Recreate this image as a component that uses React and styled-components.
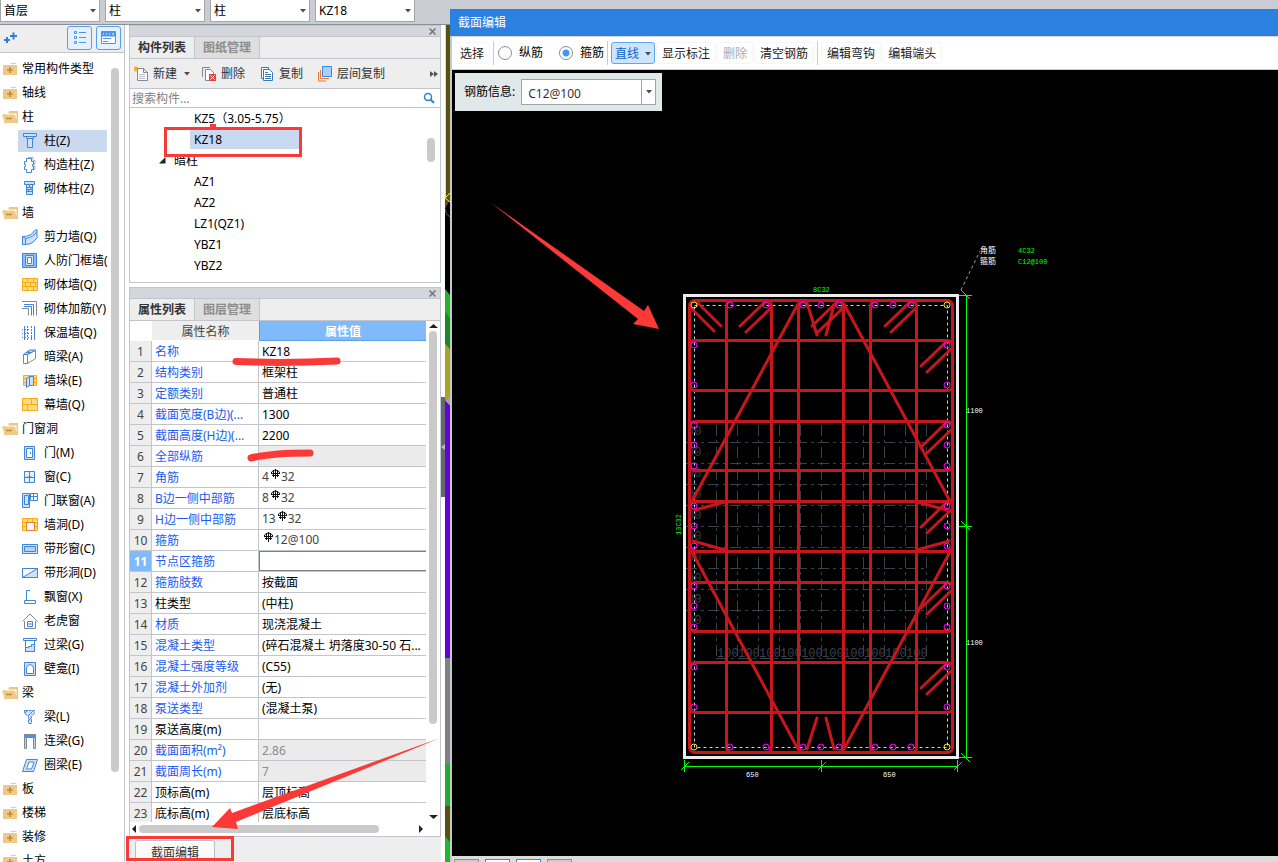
import React, { useState } from 'react'
import styled, { createGlobalStyle } from 'styled-components'

const BLUE = '#3f87d6'
const PALE = '#cfe1f8'
const GOLD = '#f9ab14'
const SAND = '#fddb80'
const STEEL = '#7d8996'

const icons = {
  column: (
    <g fill='none' stroke={BLUE}>
      <path d='M1.5 .5h13v3h-13z M4.5 3.5h7v2h-7z' fill={PALE} />
      <path d='M5.5 5.5h5v9h-5z' fill={PALE} />
    </g>
  ),
  tieColumn: (
    <g fill='none' stroke={BLUE}>
      <path d='M6 .5h5v3h2v3h-1v3h1v3h-2' stroke='#9fb4cc' />
      <path d='M4.5 1.5h5v3h2v3h-1v2h1v3h-2v3h-5v-3h-2v-3h1v-2h-1v-3h2z' />
    </g>
  ),
  brickColumn: (
    <g fill='none' stroke={BLUE}>
      <path d='M2.500 .5h10v3h-10z M4.500 3.5h6v10h-6z' fill={PALE} />
      <path d='M4 6.500h7 M4 8.500h7 M4 10.500h7 M7.500 4v2 M9 7v2 M6.500 9v2' />
    </g>
  ),
  shearWall: (
    <g fill={PALE} stroke={BLUE}>
      <path d='M.5 7.500q9 0 12-6l2.500-1v8q-4 7-11.500 7h-3z' />
      <path d='M.5 7.500l3 2q8-1 11.500-7 M3.500 9.500v6' fill='none' />
    </g>
  ),
  doorFrame: (
    <g fill={PALE} stroke={BLUE}>
      <path d='M.5 .5h14v14h-14z' fill='#8fbdf0' />
      <path d='M3.500 2.500h8v10h-8z' />
      <path d='M5.500 4.500h4v6h-4z' fill='#fff' />
    </g>
  ),
  brick: (
    <g fill={SAND} stroke={GOLD}>
      <path d='M.5 1.500h15v12h-15z' />
      <path d='M0 5.500h16 M0 9.500h16 M5.500 2v3 M11.500 2v3 M3.500 6v3 M8.500 6v3 M13.500 6v3 M5.500 10v3 M11.500 10v3' />
    </g>
  ),
  reinforce: (
    <g fill='none' stroke={BLUE}>
      <path d='M0 .5h14.500v14' stroke={STEEL} />
      <path d='M2 3.500h9.500v11 M2 5.500h7.500v9' />
      <path d='M0 7.500h6.500v7' stroke={STEEL} />
    </g>
  ),
  insulation: (
    <g fill='none' stroke={BLUE}>
      <path d='M2.500 1v14 M12.500 1v14' />
      <path d='M5.500 1v14 M9.500 1v14' strokeDasharray='2 1' />
      <path d='M0 4.500h14 M0 8.500h14 M0 12.500h14' strokeDasharray='1 2' />
    </g>
  ),
  hiddenBeam: (
    <g fill='#fff' stroke={STEEL}>
      <path d='M1.500 5.500h4v9h-4z M5.500 5.500l8-4v8l-8 5z' />
      <path d='M1.500 5.500l6-4.500h6l-8 4.500z M4 3.500h5 M7 2v3' fill={PALE} stroke={BLUE} />
    </g>
  ),
  pier: (
    <g fill={SAND} stroke={GOLD}>
      <path d='M1.500 2.500h13v10h-13z M1 5.500h14 M1 9.500h14' />
      <path d='M4.500 5.500l3-2v9l-3 2z M7.500 3.500h4v9h-4z' fill={PALE} stroke={BLUE} />
    </g>
  ),
  curtain: (
    <g fill={SAND} stroke={GOLD}>
      <path d='M.5 1.500h15v12h-15z M0 7.500h16 M9.500 1v6 M5.500 8v6' />
    </g>
  ),
  door: (
    <g fill='#fff' stroke={BLUE}>
      <path d='M2.500 1.500h10v13h-10z' fill={PALE} />
      <path d='M4.500 3.500h6v9h-6z M8.500 7v2' />
    </g>
  ),
  window: (
    <g fill='#fff' stroke={BLUE}>
      <path d='M2.500 2.500h10v11h-10z' fill='#e8f1fc' />
      <path d='M7.500 2v12 M2 8.500h11 M6 7v1 M9 7v1' />
    </g>
  ),
  doorWindow: (
    <g fill={PALE} stroke={BLUE}>
      <path d='M.5 .5h7v14h-7z' />
      <path d='M2.500 2.500h4v9h-4z' />
      <path d='M8.500 .5h7v7h-7z M11.500 0v8 M8 3.500h8' fill='#fff' />
    </g>
  ),
  wallHole: (
    <g fill={SAND} stroke={GOLD}>
      <path d='M.5 1.500h15v12h-15z M0 5.500h16 M0 9.500h16 M5.500 2v3 M10.500 2v3' />
      <path d='M4.500 5.500h8v8h-8z' fill='#fff' stroke='#ee7a35' />
    </g>
  ),
  stripWindow: (
    <g fill={PALE} stroke={BLUE}>
      <path d='M.5 3.500h15v9h-15z' />
      <path d='M2.500 5.500h11v5h-11z' fill='#b7d1f3' />
    </g>
  ),
  stripHole: (
    <g fill='#fff' stroke={BLUE}>
      <path d='M.5 3.500h15v9h-15z' />
      <path d='M.5 12.500l15-9v9z' fill={PALE} />
    </g>
  ),
  bayWindow: (
    <g fill='#fff' stroke={BLUE}>
      <path d='M8 1.500H4.500v10 M2.500 11.500h11v3h-11z' />
    </g>
  ),
  dormer: (
    <g fill='none' stroke={STEEL}>
      <path d='M.5 8.500L8 1l7.500 7.500 M2.500 8v7.500h11V8' />
      <path d='M5.500 8.500h5v5h-5z M5.500 11h5' stroke={BLUE} />
    </g>
  ),
  lintel: (
    <g fill='#fff' stroke={BLUE}>
      <path d='M1.500 1.500h13v2h-13z M3.500 3.500h9v11h-9z' />
      <path d='M3.500 14.500V10.500h3v-1h3v-2h3v7z' fill={PALE} />
    </g>
  ),
  niche: (
    <g fill={PALE} stroke={BLUE}>
      <path d='M2.500 1.500h11v13h-11z' />
      <path d='M4.500 12.500V7q0-3 3.500-3.500Q11.500 4 11.500 7v5.500z' fill='#fff' />
    </g>
  ),
  beam: (
    <g fill={PALE} stroke={BLUE}>
      <path d='M2.500 1.500h10v3l-3 3v7h-3v-7l-4-3z' strokeDasharray='3 1' />
      <path d='M3 4l3-3 M6 7l5-5 M7 11l2-2' fill='none' />
    </g>
  ),
  linkBeam: (
    <g fill='#c9cdd2' stroke={STEEL}>
      <path d='M2.500 3.500h2v12h-2z M11.500 3.500h2v12h-2z' />
      <path d='M2.500 1.500h11v3h-11z' fill='#4e93e2' />
    </g>
  ),
  ringBeam: (
    <g fill={PALE} stroke={BLUE}>
      <path d='M4.500 2.500h11l-4 12H.5z' />
      <path d='M7 5h5l-2.500 7H4.500z' fill='#fff' />
    </g>
  ),
}

const tree = [
  { label: '常用构件类型' },
  { label: '轴线' },
  {
    label: '柱',
    items: [
      ['column', '柱(Z)'],
      ['tieColumn', '构造柱(Z)'],
      ['brickColumn', '砌体柱(Z)'],
    ],
  },
  {
    label: '墙',
    items: [
      ['shearWall', '剪力墙(Q)'],
      ['doorFrame', '人防门框墙('],
      ['brick', '砌体墙(Q)'],
      ['reinforce', '砌体加筋(Y)'],
      ['insulation', '保温墙(Q)'],
      ['hiddenBeam', '暗梁(A)'],
      ['pier', '墙垛(E)'],
      ['curtain', '幕墙(Q)'],
    ],
  },
  {
    label: '门窗洞',
    items: [
      ['door', '门(M)'],
      ['window', '窗(C)'],
      ['doorWindow', '门联窗(A)'],
      ['wallHole', '墙洞(D)'],
      ['stripWindow', '带形窗(C)'],
      ['stripHole', '带形洞(D)'],
      ['bayWindow', '飘窗(X)'],
      ['dormer', '老虎窗'],
      ['lintel', '过梁(G)'],
      ['niche', '壁龛(I)'],
    ],
  },
  {
    label: '梁',
    items: [
      ['beam', '梁(L)'],
      ['linkBeam', '连梁(G)'],
      ['ringBeam', '圈梁(E)'],
    ],
  },
  { label: '板' },
  { label: '楼梯' },
  { label: '装修' },
  { label: '土方' },
]

const properties = [
  { name: '名称', value: 'KZ18' },
  { name: '结构类别', value: '框架柱' },
  { name: '定额类别', value: '普通柱' },
  { name: '截面宽度(B边)(...', value: '1300' },
  { name: '截面高度(H边)(...', value: '2200' },
  { name: '全部纵筋', value: '', locked: true },
  { name: '角筋', bars: ['4', '32'] },
  { name: 'B边一侧中部筋', bars: ['8', '32'] },
  { name: 'H边一侧中部筋', bars: ['13', '32'] },
  { name: '箍筋', bars: ['', '12@100'] },
  { name: '节点区箍筋', value: '', active: true },
  { name: '箍筋肢数', value: '按截面' },
  { name: '柱类型', value: '(中柱)', plain: true },
  { name: '材质', value: '现浇混凝土' },
  { name: '混凝土类型', value: '(碎石混凝土 坍落度30-50 石...' },
  { name: '混凝土强度等级', value: '(C55)' },
  { name: '混凝土外加剂', value: '(无)' },
  { name: '泵送类型', value: '(混凝土泵)' },
  { name: '泵送高度(m)', value: '', plain: true },
  { name: '截面面积(m²)', value: '2.86', locked: true },
  { name: '截面周长(m)', value: '7', locked: true },
  { name: '顶标高(m)', value: '层顶标高', plain: true },
  { name: '底标高(m)', value: '层底标高', plain: true },
]

const Arrow = () => (
  <svg width='6' height='4' viewBox='0 0 6 4'>
    <path d='M0 0h6L3 3.500z' fill='#4c4c4c' />
  </svg>
)

const Close = () => (
  <svg width='7' height='7' viewBox='0 0 7 7'>
    <path d='M.5 .5l6 6 M6.500 .5l-6 6' stroke='#707379' strokeWidth='1.500' />
  </svg>
)

const Folder = ({ open }) => (
  <svg width='16' height='14' viewBox='0 0 16 14'>
    {open ? (
      <g>
        <path d='M7 1h9v12H2V4h4z' fill='#eec67c' />
        <path d='M3 3.500h11.500v6H3z' fill='#fff' />
        <path d='M0 4.500h13l2 8.500H3z' fill='#efca86' />
        <path d='M4 8.500h6' stroke='#bd8c30' strokeWidth='1.500' />
      </g>
    ) : (
      <g>
        <path d='M1 3h7l1-2h5l1 2v10H1z' fill='#efca86' />
        <path d='M8 2.500h7' stroke='#fff' />
        <path d='M5 8h6 M8 5v6' stroke='#bd8c30' strokeWidth='1.500' />
      </g>
    )}
  </svg>
)

const Rebar = () => (
  <svg width='12' height='10' viewBox='0 0 12 10' fill='none' stroke='#111'>
    <path d='M6.500 0v10 M4.500 1v7 M8.500 1v7 M2 4.500h9 M3 6.500h7' />
    <path d='M2.500 5V3q4-4 8 0v2' />
  </svg>
)

const Picker = ({ label, value }) => (
  <PickerBox>
    <select aria-label={label} defaultValue={value}>
      <option>{value}</option>
    </select>
    <Arrow />
  </PickerBox>
)

const ComponentTree = () => (
  <Nav>
    <NavHead>
      <svg width='13' height='12' viewBox='0 0 13 12'>
        <path d='M0 8h6 M3 5v6 M6 4h7 M9.500 .5v7' stroke='#2f7fd4' strokeWidth='2' />
      </svg>
      <ViewButton aria-label='列表视图'>
        <svg width='14' height='14' viewBox='0 0 14 14' fill='none' stroke='#4b96ea'>
          <path d='M1.500 .5h2v2h-2z M1.500 5.500h2v2h-2z M1.500 10.500h2v2h-2z M6 1.500h7 M6 6.500h7 M6 11.500h7' />
        </svg>
      </ViewButton>
      <ViewButton aria-label='图标视图'>
        <svg width='15' height='14' viewBox='0 0 15 14' fill='none' stroke='#4b96ea'>
          <path d='M.5 .5h14v12h-14z' fill='#fff' />
          <path d='M1 1h13v4H1z' fill='#4b96ea' />
          <path d='M2 3h1 M5 3h1 M8 3h1 M11 3h2' stroke='#fff' />
          <path d='M2 7.500h8 M2 10.500h5' />
        </svg>
      </ViewButton>
    </NavHead>
    <NavBody>
      <NavList>
        {tree.map((group) => (
          <li key={group.label}>
            <GroupRow>
              <Folder open={!!group.items} />
              {group.label}
            </GroupRow>
            {group.items && (
              <ItemList>
                {group.items.map(([icon, label]) => (
                  <ItemRow key={icon} $active={icon === 'column'}>
                    <svg width='16' height='16' viewBox='0 0 16 16'>
                      {icons[icon]}
                    </svg>
                    {label}
                  </ItemRow>
                ))}
              </ItemList>
            )}
          </li>
        ))}
      </NavList>
      <Track>
        <Thumb $start='15px' $size='87%' />
      </Track>
    </NavBody>
  </Nav>
)

const ComponentList = () => (
  <Panel>
    <Caption>
      <Close />
    </Caption>
    <Tabs>
      <Tab $active>构件列表</Tab>
      <Tab>图纸管理</Tab>
    </Tabs>
    <ListTools>
      <ToolButton $menu>
        <svg width='16' height='16' viewBox='0 0 16 16' fill='#fff' stroke={STEEL}>
          <path d='M3.500 2.500h6l4 4v8h-10z M9.500 2.500v4h4' />
          <path d='M5 8.500h6 M5 10.500h6 M5 12.500h6' stroke='#b9c0c8' />
          <path d='M0 1l4 4 M4 1l-4 4 M2 0v6 M0 3h5' stroke='#f59b1d' />
        </svg>
        新建
        <Arrow />
      </ToolButton>
      <ToolButton>
        <svg width='16' height='16' viewBox='0 0 16 16' fill='none' stroke={STEEL}>
          <path d='M.5 11V1.500H8' />
          <path d='M3.500 3.500h5l3 3v8h-8z' fill='#fff' />
          <path d='M7 8h7v7H7z' fill='#e04a44' stroke='none' />
          <path d='M8.500 9.500l4 4 M12.500 9.500l-4 4' stroke='#fff' />
        </svg>
        删除
      </ToolButton>
      <ToolButton>
        <svg width='16' height='16' viewBox='0 0 16 16' fill='#fff' stroke='#3a78b8'>
          <path d='M1.500 1.500h7v11h-7z' />
          <path d='M3.500 3.500h6l3 3v8h-9z M5 8.500h6 M5 10.500h6 M5 12.500h6 M5 6.500h3' />
        </svg>
        复制
      </ToolButton>
      <ToolButton>
        <svg width='16' height='16' viewBox='0 0 16 16' fill='none'>
          <path d='M.5 6v9H8' stroke='#ee7a35' />
          <path d='M2.500 4v8.500H11' stroke='#ee7a35' />
          <path d='M4.500 .5h9v10h-9z' fill='#a9d0fb' stroke='#3a86e0' />
        </svg>
        层间复制
      </ToolButton>
      <MoreButton aria-label='更多'>
        <svg width='8' height='6' viewBox='0 0 8 6'>
          <path d='M0 0l4 3-4 3z M4 0l4 3-4 3z' fill='#555' />
        </svg>
      </MoreButton>
    </ListTools>
    <Search>
      <input aria-label='搜索构件' placeholder='搜索构件...' />
      <svg width='12' height='12' viewBox='0 0 12 12' fill='none' stroke='#2a87c8'>
        <circle cx='5' cy='5' r='3.500' strokeWidth='1.500' />
        <path d='M7.500 7.500l3.500 3.500' strokeWidth='2' />
      </svg>
    </Search>
    <ListBody>
      <Entries>
        <Entry>KZ5（3.05-5.75）</Entry>
        <Entry $active>KZ18</Entry>
        <EntryGroup>
          <svg width='7' height='7' viewBox='0 0 7 7'>
            <path d='M6.500 0v6.500H0z' fill='#222' />
          </svg>
          暗柱
        </EntryGroup>
        <Entry>AZ1</Entry>
        <Entry>AZ2</Entry>
        <Entry>LZ1(QZ1)</Entry>
        <Entry>YBZ1</Entry>
        <Entry>YBZ2</Entry>
      </Entries>
      <Track>
        <Thumb $start='30px' $size='24px' />
      </Track>
    </ListBody>
  </Panel>
)

const PropertyPanel = () => (
  <Panel $grow>
    <Caption>
      <Close />
    </Caption>
    <Tabs>
      <Tab $active>属性列表</Tab>
      <Tab>图层管理</Tab>
    </Tabs>
    <SheetArea>
      <SheetClip>
        <Sheet>
          <thead>
            <tr>
              <th aria-label='序号' />
              <th>属性名称</th>
              <th>属性值</th>
            </tr>
          </thead>
          <tbody>
            {properties.map((item, index) => (
              <PropertyRow
                key={item.name}
                $active={item.active}
                $locked={item.locked}
                $plain={item.plain}
              >
                <th>{index + 1}</th>
                <td>{item.name}</td>
                <td>
                  {item.bars ? (
                    <Bars>
                      {item.bars[0]}
                      <Rebar />
                      {item.bars[1]}
                    </Bars>
                  ) : (
                    item.value
                  )}
                </td>
              </PropertyRow>
            ))}
          </tbody>
        </Sheet>
      </SheetClip>
      <SheetTrack>
        <svg width='9' height='5' viewBox='0 0 9 5'>
          <path d='M0 5l4.500-4L9 5z' fill='#222' />
        </svg>
        <Thumb $size='79%' $start='3px' />
        <svg width='9' height='5' viewBox='0 0 9 5'>
          <path d='M0 0l4.500 4L9 0z' fill='#222' />
        </svg>
      </SheetTrack>
    </SheetArea>
    <SheetFoot>
      <svg width='5' height='8' viewBox='0 0 5 8'>
        <path d='M5 0v8L1 4z' fill='#222' />
      </svg>
      <FootThumb />
      <svg width='5' height='8' viewBox='0 0 5 8'>
        <path d='M0 0v8l4-4z' fill='#222' />
      </svg>
    </SheetFoot>
  </Panel>
)

const ModelView = () => (
  <Model preserveAspectRatio='none' viewBox='0 0 5 837'>
    <path d='M0 0h5v175L0 184z' fill='#57520e' />
    <path d='M.5 0v173' stroke='#f5f500' />
    <path d='M5 168L0 173l5 4' fill='none' stroke='#ffff00' />
    <path d='M0 184q0 5 5 8' fill='none' stroke='#1c8a24' />
    <path d='M0 264l5 6v32l-5-4z' fill='#23b523' />
    <path d='M0 287l5 6v31l-5-6z' fill='#1a8a22' />
    <path d='M0 318l5 6v48l-5 4z' fill='#a5a428' />
    <path d='M0 376l5-5v10z' fill='#a2a2a2' />
    <path d='M0 376l5 5v254l-5-2z' fill='#6a00d8' />
    <path d='M0 633h5v106H0z' fill='#808084' />
    <path d='M0 739h5v42H0z' fill='#20ac28' />
    <path d='M0 781h5v36l-5-4z' fill='#55520f' />
    <path d='M0 811l5 6v20H0z' fill='#20b82a' />
  </Model>
)

const topBars = [730, 766, 803, 821, 839, 875, 893, 911]
const sideBars = [345, 385, 425, 445, 466, 506, 526, 546, 586, 606, 627, 667, 707]
const steps = Array.from({ length: 11 }, (_, i) => i * 21)

const SectionDrawing = () => (
  <Drawing width='826' height='786' viewBox='452 70 826 786'>
    <g stroke='#39414c' strokeDasharray='11 4 3 4' fill='none'>
      {steps.map((s) => (
        <path key={s} d={`M${716.5 + s} 425V659`} />
      ))}
      {steps.slice(0, 9).map((s) => (
        <path key={s} d={`M686 ${442.5 + s}H926`} />
      ))}
      <path d='M716 658.500h211' />
    </g>
    <g fill='#39414c' fontFamily='Liberation Mono, monospace' fontSize='12'>
      {steps.slice(0, 10).map((s) => (
        <React.Fragment key={s}>
          <text x={717 + s} y='657'>
            100
          </text>
          <text x='687' y={435 + s}>
            00
          </text>
        </React.Fragment>
      ))}
    </g>
    <rect x='684.500' y='295.500' width='273' height='462' fill='none' stroke='#ededed' strokeWidth='3' />
    <rect x='694.500' y='305.500' width='253' height='442' fill='none' stroke='#b4d4fa' strokeDasharray='3 3' />
    <g fill='none' stroke='#c8161d' strokeWidth='3' strokeLinecap='round'>
      <rect x='689.500' y='300.500' width='263' height='452' rx='5' />
      <rect x='726.500' y='300.500' width='45' height='452' rx='5' />
      <rect x='798.500' y='300.500' width='45' height='452' rx='5' />
      <rect x='870.500' y='300.500' width='46' height='452' rx='5' />
      {[340.5, 421.5, 501.5, 582.5, 662.5].map((y) => (
        <rect key={y} x='689.500' y={y} width='263' height={y === 421.5 || y === 582.5 ? 49 : 50} rx='5' />
      ))}
      <path d='M798 304L691 503 M844 304L951 503 M691 550L798 749 M951 550L844 749' />
      <path d='M695 510L725 502 M917 502L947 510 M693 541L725 550 M917 550L949 541' />
      <path d='M807 303L817 335 M834 305L826 335 M817 718L807 749 M826 718L834 749' />
      <path d='M698 303L721 326 M692 309L714 331' />
      {[0, 72, 145].map((x) => (
        <path key={x} d={`M${765 + x} 302l-25 24 M${771 + x} 308l-25 24`} />
      ))}
      {[0, 81, 161, 242, 322].map((y) => (
        <path key={y} d={`M946 ${342 + y}l-25 24 M951 ${349 + y}l-24 23`} />
      ))}
    </g>
    <g fill='none' stroke='#f0f'>
      {topBars.map((x) => (
        <React.Fragment key={x}>
          <circle cx={x} cy='305' r='3' />
          <circle cx={x} cy='747' r='3' />
        </React.Fragment>
      ))}
      {sideBars.map((y) => (
        <React.Fragment key={y}>
          <circle cx='694' cy={y} r='3' />
          <circle cx='947' cy={y} r='3' />
        </React.Fragment>
      ))}
    </g>
    <g fill='none' stroke='#f5e52a'>
      <circle cx='694' cy='305' r='3' />
      <circle cx='947' cy='305' r='3' />
      <circle cx='694' cy='747' r='3' />
      <circle cx='947' cy='747' r='3' />
    </g>
    <g fill='none' stroke='#0f0'>
      <path d='M966.500 295V757 M959 295.500h13 M959 526.500h13 M959 757.500h13' />
      <path d='M961 290l9 9 M961 521l9 9 M961 753l9 9' />
      <path d='M684 766.500H958 M684.500 760v12 M821.500 760v12 M957.500 760v12' />
      <path d='M681 770l8-8 M818 770l8-8 M954 770l8-8' />
    </g>
    <path d='M961 290L980 251' stroke='#a0a0a0' strokeDasharray='3 3' />
    <g fontFamily='Liberation Mono, Noto Sans CJK SC, monospace' fontSize='7' fill='#0f0'>
      <text x='813' y='292'>8C32</text>
      <text transform='translate(681 535) rotate(-90)'>13C32</text>
      <text x='1018' y='253'>4C32</text>
      <text x='1018' y='264'>C12@100</text>
      <g fill='#fff'>
        <text x='966' y='413'>1100</text>
        <text x='966' y='645'>1100</text>
        <text x='746' y='777'>650</text>
        <text x='883' y='777'>650</text>
        <text x='980' y='253' fontSize='8'>角筋</text>
        <text x='980' y='264' fontSize='8'>箍筋</text>
      </g>
    </g>
  </Drawing>
)

const SectionEditor = () => {
  const [kind, setKind] = useState('stirrup')
  return (
    <Dialog>
      <DialogTitle>截面编辑</DialogTitle>
      <DialogTools>
        <FlatButton>选择</FlatButton>
        <Divider />
        <RadioLabel>
          <input type='radio' name='kind' checked={kind === 'long'} onChange={() => setKind('long')} />
          纵筋
        </RadioLabel>
        <RadioLabel>
          <input type='radio' name='kind' checked={kind === 'stirrup'} onChange={() => setKind('stirrup')} />
          箍筋
        </RadioLabel>
        <Divider />
        <FlatButton $active>
          直线
          <Arrow />
        </FlatButton>
        <FlatButton>显示标注</FlatButton>
        <FlatButton disabled>删除</FlatButton>
        <FlatButton>清空钢筋</FlatButton>
        <Divider />
        <FlatButton>编辑弯钩</FlatButton>
        <FlatButton>编辑端头</FlatButton>
      </DialogTools>
      <Canvas>
        <SectionDrawing />
        <InfoBar>
          <label htmlFor='rebar'>钢筋信息:</label>
          <Combo>
            <input id='rebar' defaultValue='C12@100' />
            <button aria-label='展开'>
              <Arrow />
            </button>
          </Combo>
        </InfoBar>
      </Canvas>
      <DialogFoot>
        <FootButton aria-label='正交' />
        <FootButton aria-label='捕捉' $active />
        <FootButton aria-label='交点' $active />
        <FootButton aria-label='垂点' />
      </DialogFoot>
    </Dialog>
  )
}

const Marks = () => (
  <MarkLayer width='1278' height='862' viewBox='0 0 1278 862'>
    <g fill='none' stroke='#fb3a38' strokeWidth='3'>
      <rect x='165.500' y='128.500' width='135' height='27' />
      <rect x='127.500' y='837.500' width='105' height='22' />
      <path d='M236 361.500q50 2 101-.5' strokeWidth='7' strokeLinecap='round' />
      <path d='M251 458q20-5 59-5' strokeWidth='7' strokeLinecap='round' />
    </g>
    <g fill='#fb3a38'>
      <path d='M210 124h6v6h-6z' />
      <path d='M440 738L232 813l-2-5-18 19 26 2-2-7z' />
      <path d='M490 202L644 311l4-6 11 24-26-5 5-5z' />
    </g>
  </MarkLayer>
)

export default function App() {
  return (
    <Shell>
      <Global />
      <TopBar>
        <Picker label='楼层' value='首层' />
        <Picker label='构件大类' value='柱' />
        <Picker label='构件类型' value='柱' />
        <Picker label='构件' value='KZ18' />
      </TopBar>
      <Workspace>
        <ComponentTree />
        <Side>
          <ComponentList />
          <PropertyPanel />
          <SideFoot>
            <button>截面编辑</button>
          </SideFoot>
        </Side>
        <Splitter>
          <button aria-label='收起'>
            <svg width='4' height='6' viewBox='0 0 4 6'>
              <path d='M4 0v6L0 3z' fill='#b9bec4' />
            </svg>
          </button>
        </Splitter>
        <ModelView />
      </Workspace>
      <SectionEditor />
      <Marks />
    </Shell>
  )
}

const Global = createGlobalStyle`
  * {
    box-sizing: border-box;
  }
  body {
    margin: 0;
    background: #000;
  }
  body, button, input, select {
    font-family: 'Noto Sans', 'Noto Sans CJK SC', sans-serif;
    font-size: 12px;
    line-height: 18px;
    color: #000;
  }
  button {
    padding: 0;
    border: 0;
    background: none;
    white-space: nowrap;
  }
  ul {
    list-style: none;
    margin: 0;
    padding: 0;
  }
  svg {
    display: block;
    flex: none;
  }
`

const Shell = styled.div`
  position: relative;
  display: flex;
  flex-direction: column;
  height: 100vh;
  overflow: hidden;
`
const TopBar = styled.header`
  display: flex;
  gap: 5px;
  height: 25px;
  flex: none;
  background: #c9ccd3;
  border-bottom: 1px solid #8b9097;
`
const PickerBox = styled.div`
  display: flex;
  align-items: center;
  width: 100px;
  height: 22px;
  padding-right: 3px;
  background: #fff;
  border: 1px solid #a4a6aa;
  border-top: 0;

  select {
    flex: 1;
    min-width: 0;
    height: 20px;
    padding: 0 3px;
    border: 0;
    background: none;
    appearance: none;
  }
`
const Workspace = styled.main`
  display: flex;
  flex: 1;
  min-height: 0;
  background: #fff;
`
const Nav = styled.nav`
  display: flex;
  flex-direction: column;
  width: 125px;
  flex: none;
  border-right: 1px solid #c2c5ca;
`
const NavHead = styled.div`
  display: flex;
  align-items: center;
  gap: 4px;
  height: 28px;
  flex: none;
  padding: 0 3px 2px 4px;
  background: #eee;
  border-bottom: 1px solid #c2c5ca;

  > svg {
    margin-right: auto;
  }
`
const ViewButton = styled.button`
  display: flex;
  align-items: center;
  justify-content: center;
  width: 25px;
  height: 24px;
  background: #e6f1fe;
  border: 1px solid #559fee;
  border-radius: 3px;
`
const NavBody = styled.div`
  display: flex;
  flex: 1;
  min-height: 0;
  overflow: hidden;
  padding-right: 5px;
`
const NavList = styled.ul`
  flex: 1;
  min-width: 0;
  padding-top: 4px;
`
const GroupRow = styled.div`
  display: flex;
  align-items: center;
  gap: 4px;
  height: 24px;
  padding-left: 2px;
`
const ItemList = styled.ul`
  display: flex;
  flex-direction: column;
  gap: 2px;
  padding: 1px 4px 1px 18px;
`
const ItemRow = styled.li`
  display: flex;
  align-items: center;
  gap: 6px;
  height: 22px;
  padding-left: 4px;
  white-space: nowrap;
  background: ${(props) => (props.$active ? '#c9d9ef' : 'none')};
`
const Track = styled.div`
  width: 8px;
  flex: none;
`
const Thumb = styled.div`
  width: 8px;
  height: ${(props) => props.$size};
  margin-top: ${(props) => props.$start};
  border-radius: 4px;
  background: #cacaca;
`
const Side = styled.section`
  display: flex;
  flex-direction: column;
  width: 312px;
  flex: none;
  margin-left: 4px;
`
const Panel = styled.section`
  display: flex;
  flex-direction: column;
  flex: ${(props) => (props.$grow ? '1' : 'none')};
  min-height: 0;
  margin-bottom: ${(props) => (props.$grow ? '0' : '4px')};
  border: 1px solid #c2c5ca;
  overflow: hidden;
`
const Caption = styled.div`
  display: flex;
  align-items: center;
  justify-content: flex-end;
  height: 11px;
  flex: none;
  padding-right: 4px;
  background: #d4d6dc;
  border-bottom: 1px solid #c2c5ca;
`
const Tabs = styled.div`
  display: flex;
  height: 22px;
  flex: none;
  background: #eee;
  border-bottom: 1px solid #c2c5ca;
`
const Tab = styled.button`
  padding: 0 8px;
  font-weight: bold;
  color: ${(props) => (props.$active ? '#333' : '#8c8c8c')};
  background: ${(props) => (props.$active ? '#eee' : '#dedede')};
  border-right: 1px solid #c2c5ca;
`
const ListTools = styled.div`
  display: flex;
  align-items: center;
  gap: 15px;
  height: 30px;
  flex: none;
  padding: 0 2px 0 4px;
  background: #eee;
  border-bottom: 1px solid #c2c5ca;
`
const ToolButton = styled.button`
  display: flex;
  align-items: center;
  gap: 3px;
  margin-right: ${(props) => (props.$menu ? '-3px' : '0')};
  color: #333;

  svg + svg {
    margin-left: 4px;
  }
`
const MoreButton = styled.button`
  margin-left: auto;
`
const Search = styled.div`
  display: flex;
  align-items: center;
  height: 19px;
  flex: none;
  padding-right: 5px;
  background: #fff;
  border-bottom: 1px solid #c2c5ca;

  input {
    flex: 1;
    min-width: 0;
    height: 18px;
    padding: 1px 2px 0;
    border: 0;
  }
  input::placeholder {
    color: #808080;
  }
`
const ListBody = styled.div`
  display: flex;
  height: 174px;
  padding-right: 5px;
`
const Entries = styled.ul`
  flex: 1;
`
const Entry = styled.li`
  height: 20px;
  line-height: 22px;
  margin: 0 128px 1px 60px;
  padding-left: 4px;
  white-space: nowrap;
  background: ${(props) => (props.$active ? '#c9d9ef' : 'none')};
`
const EntryGroup = styled.li`
  display: flex;
  align-items: center;
  gap: 8px;
  height: 21px;
  padding-left: 29px;
`
const SheetArea = styled.div`
  display: flex;
  flex: 1;
  min-height: 0;
`
const SheetClip = styled.div`
  flex: 1;
  overflow: hidden;
`
const Sheet = styled.table`
  width: 100%;
  table-layout: fixed;
  border-collapse: separate;
  border-spacing: 0;

  th,
  td {
    padding: 2px 0 0;
    font-weight: normal;
    white-space: nowrap;
    overflow: hidden;
  }
  thead th {
    height: 20px;
    line-height: 17px;
    color: #444;
    background: #eee;
    border-bottom: 1px solid #fff;
  }
  thead th:nth-child(1) {
    width: 22px;
    background: #fff;
  }
  thead th:nth-child(2) {
    width: 107px;
  }
  thead th:nth-child(3) {
    color: #fff;
    font-weight: bold;
    background: #80bafb;
    border-bottom-color: #5c9fe8;
    border-left: 1px solid #5c9fe8;
  }
`
const PropertyRow = styled.tr`
  th,
  td {
    height: 21px;
    line-height: 18px;
    border-bottom: 1px solid #c2c5ca;
    border-right: 1px solid #c2c5ca;
  }
  th {
    color: ${(props) => (props.$active ? '#fff' : '#444')};
    font-weight: ${(props) => (props.$active ? 'bold' : 'normal')};
    background: ${(props) => (props.$active ? '#80bafb' : '#eee')};
  }
  td {
    padding-left: 3px;
    color: ${(props) => (props.$plain ? '#000' : '#1a5cf0')};
  }
  td:last-child {
    border-right: 0;
    color: ${(props) => (props.$locked ? '#8c8c8c' : '#000')};
    background: ${(props) => (props.$locked ? '#ebebeb' : '#fff')};
    box-shadow: ${(props) => (props.$active ? 'inset 1px 1px #808080, inset 0 -1px #808080' : 'none')};
  }
`
const Bars = styled.span`
  display: flex;
  align-items: flex-start;
  height: 18px;
  line-height: 16px;
  color: #444;
`
const SheetTrack = styled.div`
  display: flex;
  flex-direction: column;
  align-items: center;
  width: 14px;
  flex: none;
  padding: 2px 0;

  svg:last-child {
    margin-top: auto;
  }
`
const SheetFoot = styled.div`
  display: flex;
  align-items: center;
  gap: 3px;
  height: 14px;
  flex: none;
  padding: 0 16px 0 1px;

  svg:last-child {
    margin-left: auto;
  }
`
const FootThumb = styled.div`
  width: 240px;
  height: 8px;
  border-radius: 4px;
  background: #cacaca;
`
const SideFoot = styled.footer`
  height: 25px;
  flex: none;
  padding: 3px 6px 0;
  background: #eee;
  overflow: hidden;

  button {
    width: 80px;
    height: 26px;
    color: #333;
    background: #fafafa;
    border: 1px solid #b8bfcc;
    border-radius: 3px;
  }
`
const Splitter = styled.div`
  display: flex;
  width: 4px;
  flex: none;
  padding-top: 372px;

  button {
    width: 4px;
    height: 100px;
    background: #5f6972;
  }
`
const Model = styled.svg`
  width: 5px;
  height: 100%;
  background: #000;
`
const Dialog = styled.section`
  position: absolute;
  top: 9px;
  right: 0;
  bottom: 0;
  left: 450px;
  display: flex;
  flex-direction: column;
  background: #fff;
`
const DialogTitle = styled.div`
  height: 27px;
  flex: none;
  padding-left: 8px;
  line-height: 27px;
  color: #fff;
  background: #2c80e0;
`
const DialogTools = styled.div`
  display: flex;
  align-items: center;
  gap: 1px;
  height: 34px;
  flex: none;
  padding-left: 2px;
  border-top: 1px solid #d5d5d5;
  border-left: 2px solid #c3c8d1;
  border-bottom: 1px solid #ccc;
`
const FlatButton = styled.button`
  display: flex;
  align-items: center;
  gap: 6px;
  height: 22px;
  padding: 2px ${(props) => (props.$active ? '3px' : '5px')} 0;
  color: ${(props) => (props.$active ? '#0b63cf' : '#222')};
  background: ${(props) => (props.$active ? '#cde4fe' : '#fff')};
  border: 1px solid ${(props) => (props.$active ? '#5fa5f0' : '#f6f6f6')};
  border-radius: 3px;

  &:disabled {
    color: #aaa;
  }
`
const Divider = styled.span`
  width: 1px;
  height: 24px;
  margin: 0 2px;
  background: #ccc;
`
const RadioLabel = styled.label`
  display: flex;
  align-items: center;
  gap: 7px;
  padding-left: 1px;

  & + & {
    margin-left: 14px;
  }
  input {
    width: 14px;
    height: 14px;
    margin: 0;
    appearance: none;
    background: #fff;
    border: 1px solid #8c8c8c;
    border-radius: 50%;
  }
  input:checked {
    background: radial-gradient(circle, #3f97f6 3px, #fff 4px);
  }
`
const Canvas = styled.div`
  position: relative;
  flex: 1;
  min-height: 0;
  padding: 3px;
  overflow: hidden;
  background: #000;
  border-left: 2px solid #c3c8d1;
`
const Drawing = styled.svg`
  position: absolute;
  top: 0;
  left: 0;
`
const InfoBar = styled.div`
  position: relative;
  display: flex;
  align-items: center;
  gap: 6px;
  width: 207px;
  height: 38px;
  padding: 0 6px 0 9px;
  background: #e0e8ea;

  label {
    flex: none;
  }
`
const Combo = styled.div`
  display: flex;
  flex: 1;
  min-width: 0;
  height: 26px;
  background: #fff;
  border: 1px solid #a2a5a8;

  input {
    flex: 1;
    min-width: 0;
    padding: 3px 6px 0;
    color: #333;
    border: 0;
    background: none;
  }
  button {
    display: flex;
    align-items: center;
    justify-content: center;
    width: 14px;
    border-left: 1px solid #a2a5a8;
  }
`
const DialogFoot = styled.footer`
  display: flex;
  gap: 6px;
  height: 6px;
  flex: none;
  padding: 3px 2px 0;
  overflow: hidden;
  background: #dcdcdc;
  border-left: 2px solid #c3c8d1;
`
const FootButton = styled.button`
  width: 25px;
  height: 22px;
  background: ${(props) => (props.$active ? '#fff' : '#ccc')};
  border: 1px solid ${(props) => (props.$active ? '#2d8bea' : '#909090')};
`
const MarkLayer = styled.svg`
  position: absolute;
  top: 0;
  left: 0;
  pointer-events: none;
`
